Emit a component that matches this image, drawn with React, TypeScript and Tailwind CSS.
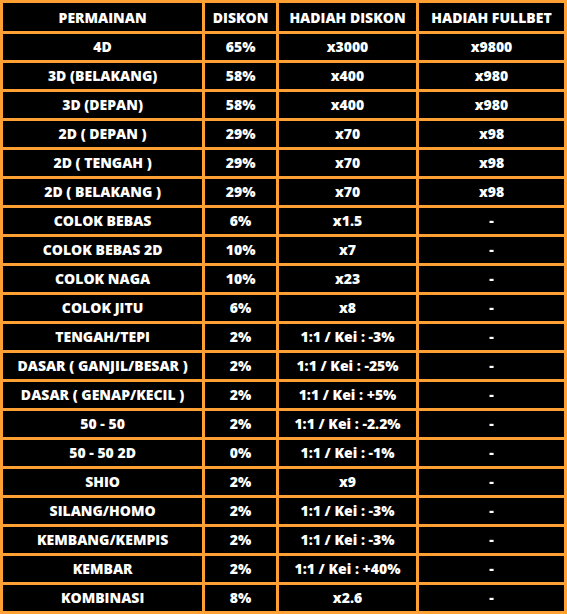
import React from "react";

const rows: [string, string, string, string][] = [
  ["4D", "65%", "x3000", "x9800"],
  ["3D (BELAKANG)", "58%", "x400", "x980"],
  ["3D (DEPAN)", "58%", "x400", "x980"],
  ["2D ( DEPAN )", "29%", "x70", "x98"],
  ["2D ( TENGAH )", "29%", "x70", "x98"],
  ["2D ( BELAKANG )", "29%", "x70", "x98"],
  ["COLOK BEBAS", "6%", "x1.5", "-"],
  ["COLOK BEBAS 2D", "10%", "x7", "-"],
  ["COLOK NAGA", "10%", "x23", "-"],
  ["COLOK JITU", "6%", "x8", "-"],
  ["TENGAH/TEPI", "2%", "1:1 / Kei : -3%", "-"],
  ["DASAR ( GANJIL/BESAR )", "2%", "1:1 / Kei : -25%", "-"],
  ["DASAR ( GENAP/KECIL )", "2%", "1:1 / Kei : +5%", "-"],
  ["50 - 50", "2%", "1:1 / Kei : -2.2%", "-"],
  ["50 - 50 2D", "0%", "1:1 / Kei : -1%", "-"],
  ["SHIO", "2%", "x9", "-"],
  ["SILANG/HOMO", "2%", "1:1 / Kei : -3%", "-"],
  ["KEMBANG/KEMPIS", "2%", "1:1 / Kei : -3%", "-"],
  ["KEMBAR", "2%", "1:1 / Kei : +40%", "-"],
  ["KOMBINASI", "8%", "x2.6", "-"],
];

const headers = ["PERMAINAN", "DISKON", "HADIAH DISKON", "HADIAH FULLBET"];

export default function App() {
  return (
    <div className="w-[567px] h-[614px] bg-black">
      <table
        className="w-[567px] border-collapse border-[3px] border-[#ffa034] text-white text-[14px] font-extrabold text-center"
        style={{ fontFamily: '"Open Sans", "Liberation Sans", sans-serif' }}
      >
        <colgroup>
          <col className="w-[203px]" />
          <col className="w-[74px]" />
          <col className="w-[141px]" />
          <col className="w-[149px]" />
        </colgroup>
        <thead>
          <tr className="h-[31px]">
            {headers.map((h) => (
              <th key={h} className="border-[3px] border-[#ffa034] p-0 font-extrabold">
                {h}
              </th>
            ))}
          </tr>
        </thead>
        <tbody>
          {rows.map((r, i) => (
            <tr key={i} className="h-[29px]">
              {r.map((c, j) => (
                <td key={j} className="border-[3px] border-[#ffa034] p-0 leading-none">
                  {c}
                </td>
              ))}
            </tr>
          ))}
        </tbody>
      </table>
    </div>
  );
}
